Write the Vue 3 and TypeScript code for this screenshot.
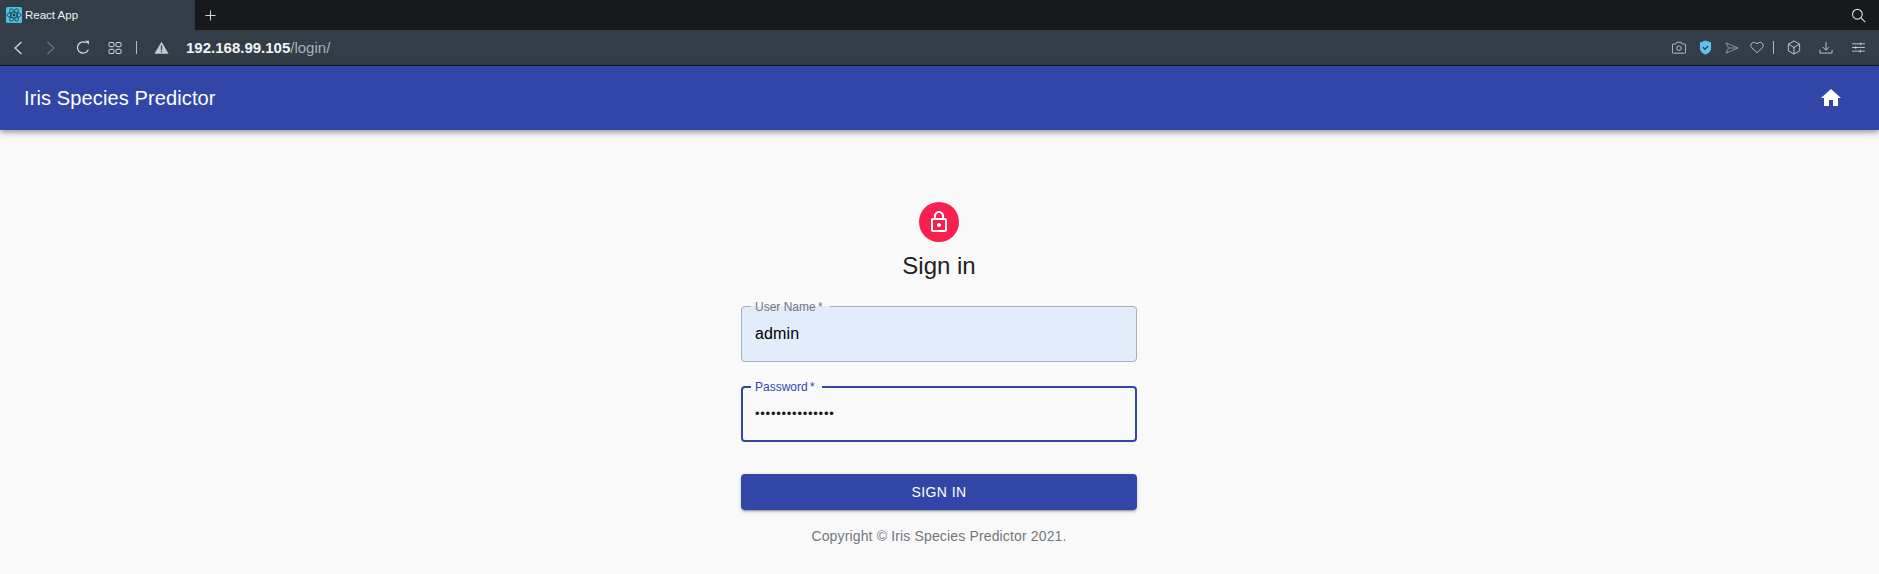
<template>
  <div class="browser">
    <div class="tab-strip">
      <div class="tab">
        <svg class="favicon" viewBox="0 0 16 16">
          <rect width="16" height="16" rx="1.5" fill="#4cc0e0" />
          <g fill="none" stroke="#1c3a48" stroke-width="0.8">
            <ellipse cx="8" cy="8" rx="7" ry="2.8" />
            <ellipse cx="8" cy="8" rx="7" ry="2.8" transform="rotate(60 8 8)" />
            <ellipse cx="8" cy="8" rx="7" ry="2.8" transform="rotate(120 8 8)" />
          </g>
          <circle cx="8" cy="8" r="1.4" fill="#1c3a48" />
        </svg>
        <span class="tab-title">React App</span>
      </div>
      <svg class="new-tab" viewBox="0 0 12 12">
        <path d="M6 .5v11M.5 6h11" stroke="#e4e6e8" stroke-width="1" fill="none" />
      </svg>
      <svg class="search" viewBox="0 0 16 16" fill="none" stroke="#d5d8db" stroke-width="1.2">
        <circle cx="6.8" cy="6.6" r="5.2" />
        <path d="M10.6 10.4l4.6 4.6" />
      </svg>
    </div>

    <div class="toolbar">
      <div class="nav-group">
        <svg class="icon back" viewBox="0 0 10 14" fill="none" stroke="#d4d8dc" stroke-width="1.3">
          <path d="M8.5 1L2 7l6.5 6" />
        </svg>
        <svg class="icon forward" viewBox="0 0 10 14" fill="none" stroke="#6a737c" stroke-width="1.3">
          <path d="M1.5 1L8 7l-6.500 6" />
        </svg>
        <svg class="icon reload" viewBox="0 0 16 16" fill="none" stroke="#d4d8dc" stroke-width="1.3">
          <path d="M13.200 10.200A6 6 0 1 1 10.800 3" />
          <path d="M9.600 .8h4.200v4.200z" fill="#d4d8dc" stroke="none" />
        </svg>
        <svg class="icon speed" viewBox="0 0 14 14" fill="none" stroke="#d4d8dc" stroke-width="1">
          <rect x="1" y="1.500" width="5" height="4.200" rx="1" />
          <rect x="8" y="1.500" width="5" height="4.200" rx="1" />
          <rect x="1" y="8.300" width="5" height="4.200" rx="1" />
          <rect x="8" y="8.300" width="5" height="4.200" rx="1" />
        </svg>
        <span class="divider first"></span>
        <svg class="icon warn" viewBox="0 0 16 14">
          <path d="M8 .8L15.600 13.600H.4z" fill="#c6cacd" />
          <path d="M7.300 4.800h1.400v4.800H7.300zM7.300 10.600h1.400V12H7.300z" fill="#333e49" />
        </svg>
        <span class="address"><b>192.168.99.105</b>/login/</span>
      </div>
      <div class="tool-group">
        <svg class="icon camera" viewBox="0 0 16 14" fill="none" stroke="#c9cdd1" stroke-width="1">
          <path d="M1.500 3h3l1-2h5l1 2h3a1 1 0 0 1 1 1v8.500a1 1 0 0 1-1 1h-13a1 1 0 0 1-1-1V4a1 1 0 0 1 1-1z" />
          <circle cx="8" cy="7.800" r="2.600" />
        </svg>
        <svg class="icon shield" viewBox="0 0 14 16">
          <path d="M7 .5l6 2v6.500c0 3.200-3 5.500-6 6.500-3-1-6-3.300-6-6.500V2.500z" fill="#62c0f0" />
          <path d="M4.300 7.800l2 2 3.500-3.400" fill="none" stroke="#1f3f5c" stroke-width="1.500" />
        </svg>
        <svg class="icon send" viewBox="0 0 16 14" fill="none" stroke="#9aa1a7" stroke-width="1">
          <path d="M1 1l14 6-14 6 3-6zM4 7h11" />
        </svg>
        <svg class="icon heart" viewBox="0 0 16 14" fill="none" stroke="#c9cdd1" stroke-width="1">
          <path d="M8 13L2 7.200C.4 5.500.7 3 2.300 1.800 4 .6 6.700 1 8 3c1.300-2 4-2.400 5.700-1.200C15.300 3 15.600 5.500 14 7.200z" />
        </svg>
        <span class="divider second"></span>
        <svg class="icon cube" viewBox="0 0 14 16" fill="none" stroke="#c9cdd1" stroke-width="1">
          <path d="M7 1l6 3.400v7.200L7 15l-6-3.400V4.400zM1 4.400L7 8l6-3.600M7 8v7" />
        </svg>
        <svg class="icon download" viewBox="0 0 14 14" fill="none" stroke="#c9cdd1" stroke-width="1">
          <path d="M7 1v8.500M3.500 6.500L7 10l3.500-3.500M.5 9.500v3.500h13V9.500" />
        </svg>
        <svg class="icon sliders" viewBox="0 0 14 12" fill="none" stroke="#c9cdd1" stroke-width="1">
          <path d="M0 2h14M0 6h14M0 10h14M9.500 .5v3M4 4.500v3M9 8.500v3" />
        </svg>
      </div>
    </div>

    <header class="app-bar">
      <h1 class="app-title">Iris Species Predictor</h1>
      <svg class="home" viewBox="0 0 24 24">
        <path d="M10 20v-6h4v6h5v-8h3L12 3 2 12h3v8z" fill="#fff" />
      </svg>
    </header>

    <main class="page">
      <div class="avatar">
        <svg viewBox="0 0 24 24" class="lock">
          <path
            d="M18 8h-1V6c0-2.760-2.240-5-5-5S7 3.240 7 6v2H6c-1.100 0-2 .9-2 2v10c0 1.100.9 2 2 2h12c1.100 0 2-.9 2-2V10c0-1.100-.9-2-2-2zM8.900 6c0-1.710 1.390-3.100 3.100-3.100s3.100 1.390 3.100 3.100v2H8.900V6zM18 20H6V10h12v10zm-6-3c1.100 0 2-.9 2-2s-.9-2-2-2-2 .9-2 2 .9 2 2 2z"
            fill="#fff"
          />
        </svg>
      </div>
      <h2 class="heading">Sign in</h2>
      <form class="login-form" @submit.prevent>
        <fieldset class="field filled">
          <legend>User Name&thinsp;*</legend>
          <input v-model="username" type="text" />
        </fieldset>
        <fieldset class="field focused">
          <legend>Password&thinsp;*</legend>
          <input v-model="password" type="password" />
        </fieldset>
        <button class="submit" type="submit">Sign In</button>
      </form>
      <p class="copyright">Copyright © Iris Species Predictor 2021.</p>
    </main>
  </div>
</template>

<script setup lang="ts">
import { ref } from "vue";

const username = ref<string>("admin");
const password = ref<string>("adminpassword12");
</script>

<style>
html,
body {
  margin: 0;
  background: #f9f9fa;
}
</style>

<style scoped>
.browser {
  width: 1879px;
  height: 574px;
  overflow: hidden;
  font-family: "Liberation Sans", Arial, sans-serif;
  background: #f9f9fa;
}

.tab-strip {
  height: 30px;
  display: flex;
  align-items: center;
  background: #17191c;
}

.tab {
  width: 195px;
  height: 30px;
  display: flex;
  align-items: center;
  box-sizing: border-box;
  padding-left: 6px;
  background: #323d48;
}

.favicon {
  width: 16px;
  height: 16px;
}

.tab-title {
  margin-left: 3px;
  font-size: 11.5px;
  color: #f0f2f3;
}

.new-tab {
  width: 11px;
  height: 11px;
  margin-left: 10px;
}

.search {
  width: 15px;
  height: 15px;
  margin-left: auto;
  margin-right: 13px;
}

.toolbar {
  height: 35px;
  display: flex;
  align-items: center;
  justify-content: space-between;
  background: #323d48;
  border-bottom: 1px solid #14171a;
}

.nav-group,
.tool-group {
  display: flex;
  align-items: center;
}

.icon {
  display: block;
  flex: none;
}

.back {
  width: 10px;
  height: 14px;
  margin-left: 13px;
}

.forward {
  width: 10px;
  height: 14px;
  margin-left: 23px;
}

.reload {
  width: 15px;
  height: 15px;
  margin-left: 20px;
}

.speed {
  width: 14px;
  height: 14px;
  margin-left: 17px;
}

.divider {
  width: 1px;
  height: 13px;
  background: #b6bbc0;
}

.divider.first {
  margin-left: 14px;
}

.warn {
  width: 15px;
  height: 13px;
  margin-left: 17px;
}

.address {
  margin-left: 17px;
  font-size: 15px;
  color: #aab0b5;
}

.address b {
  font-weight: 700;
  color: #f1f3f4;
}

.camera {
  width: 14px;
  height: 13px;
}

.shield {
  width: 13px;
  height: 15px;
  margin-left: 13px;
}

.send {
  width: 14px;
  height: 12px;
  margin-left: 13px;
}

.heart {
  width: 14px;
  height: 13px;
  margin-left: 11px;
}

.divider.second {
  margin-left: 9px;
}

.cube {
  width: 14px;
  height: 15px;
  margin-left: 13px;
}

.download {
  width: 14px;
  height: 13px;
  margin-left: 18px;
}

.sliders {
  width: 13px;
  height: 11px;
  margin-left: 19px;
  margin-right: 14px;
}

.app-bar {
  height: 64px;
  display: flex;
  align-items: center;
  justify-content: space-between;
  box-sizing: border-box;
  padding: 0 36px 0 24px;
  background: #3246a8;
  box-shadow: 0 2px 4px -1px rgba(0, 0, 0, 0.2), 0 4px 5px 0 rgba(0, 0, 0, 0.14),
    0 1px 10px 0 rgba(0, 0, 0, 0.12);
}

.app-title {
  margin: 0;
  font-size: 20px;
  font-weight: 400;
  letter-spacing: 0.12px;
  color: #fff;
}

.home {
  width: 24px;
  height: 24px;
}

.page {
  display: flex;
  flex-direction: column;
  align-items: center;
  padding-top: 72px;
  padding-right: 1px;
}

.avatar {
  width: 40px;
  height: 40px;
  display: flex;
  align-items: center;
  justify-content: center;
  border-radius: 50%;
  background: #f9204f;
}

.lock {
  width: 24px;
  height: 24px;
}

.heading {
  margin: 8px 0 0;
  font-size: 24px;
  line-height: 32px;
  font-weight: 400;
  color: #212121;
}

.login-form {
  width: 396px;
  display: flex;
  flex-direction: column;
  margin-top: 16px;
}

.field {
  margin: 0;
  min-width: 0;
  height: 62.5px;
  box-sizing: border-box;
  padding: 0 9px;
  border: 1px solid #a9b0bd;
  border-radius: 4px;
}

.field legend {
  height: 14px;
  padding: 0 7px 0 4px;
  font-size: 12px;
  line-height: 14px;
  color: #73777c;
}

.field input {
  display: block;
  width: 100%;
  height: 30px;
  box-sizing: border-box;
  margin-top: 5px;
  padding: 0 0 0 4px;
  border: 0;
  outline: 0;
  background: transparent;
  font-family: inherit;
  font-size: 16px;
  letter-spacing: 0.15px;
  color: #000;
}

.filled {
  margin-top: 1.5px;
  background: #e2edfb;
}

.focused {
  height: 62px;
  margin-top: 18px;
  padding: 0 8px;
  border: 2px solid #3246a8;
}

.focused legend {
  color: #3246a8;
}

.field.focused input {
  margin-top: 4px;
  font-size: 13px;
  letter-spacing: 0.75px;
  color: #1a1a1a;
}

.submit {
  height: 36px;
  margin-top: 32px;
  border: 0;
  border-radius: 4px;
  background: #3246a8;
  font-family: inherit;
  font-size: 14px;
  letter-spacing: 0.4px;
  text-transform: uppercase;
  color: #fff;
  box-shadow: 0 3px 1px -2px rgba(0, 0, 0, 0.2), 0 2px 2px 0 rgba(0, 0, 0, 0.14),
    0 1px 5px 0 rgba(0, 0, 0, 0.12);
}

.copyright {
  margin: 16px 0 0;
  font-size: 14px;
  line-height: 20px;
  letter-spacing: 0.15px;
  color: #73777c;
}
</style>
